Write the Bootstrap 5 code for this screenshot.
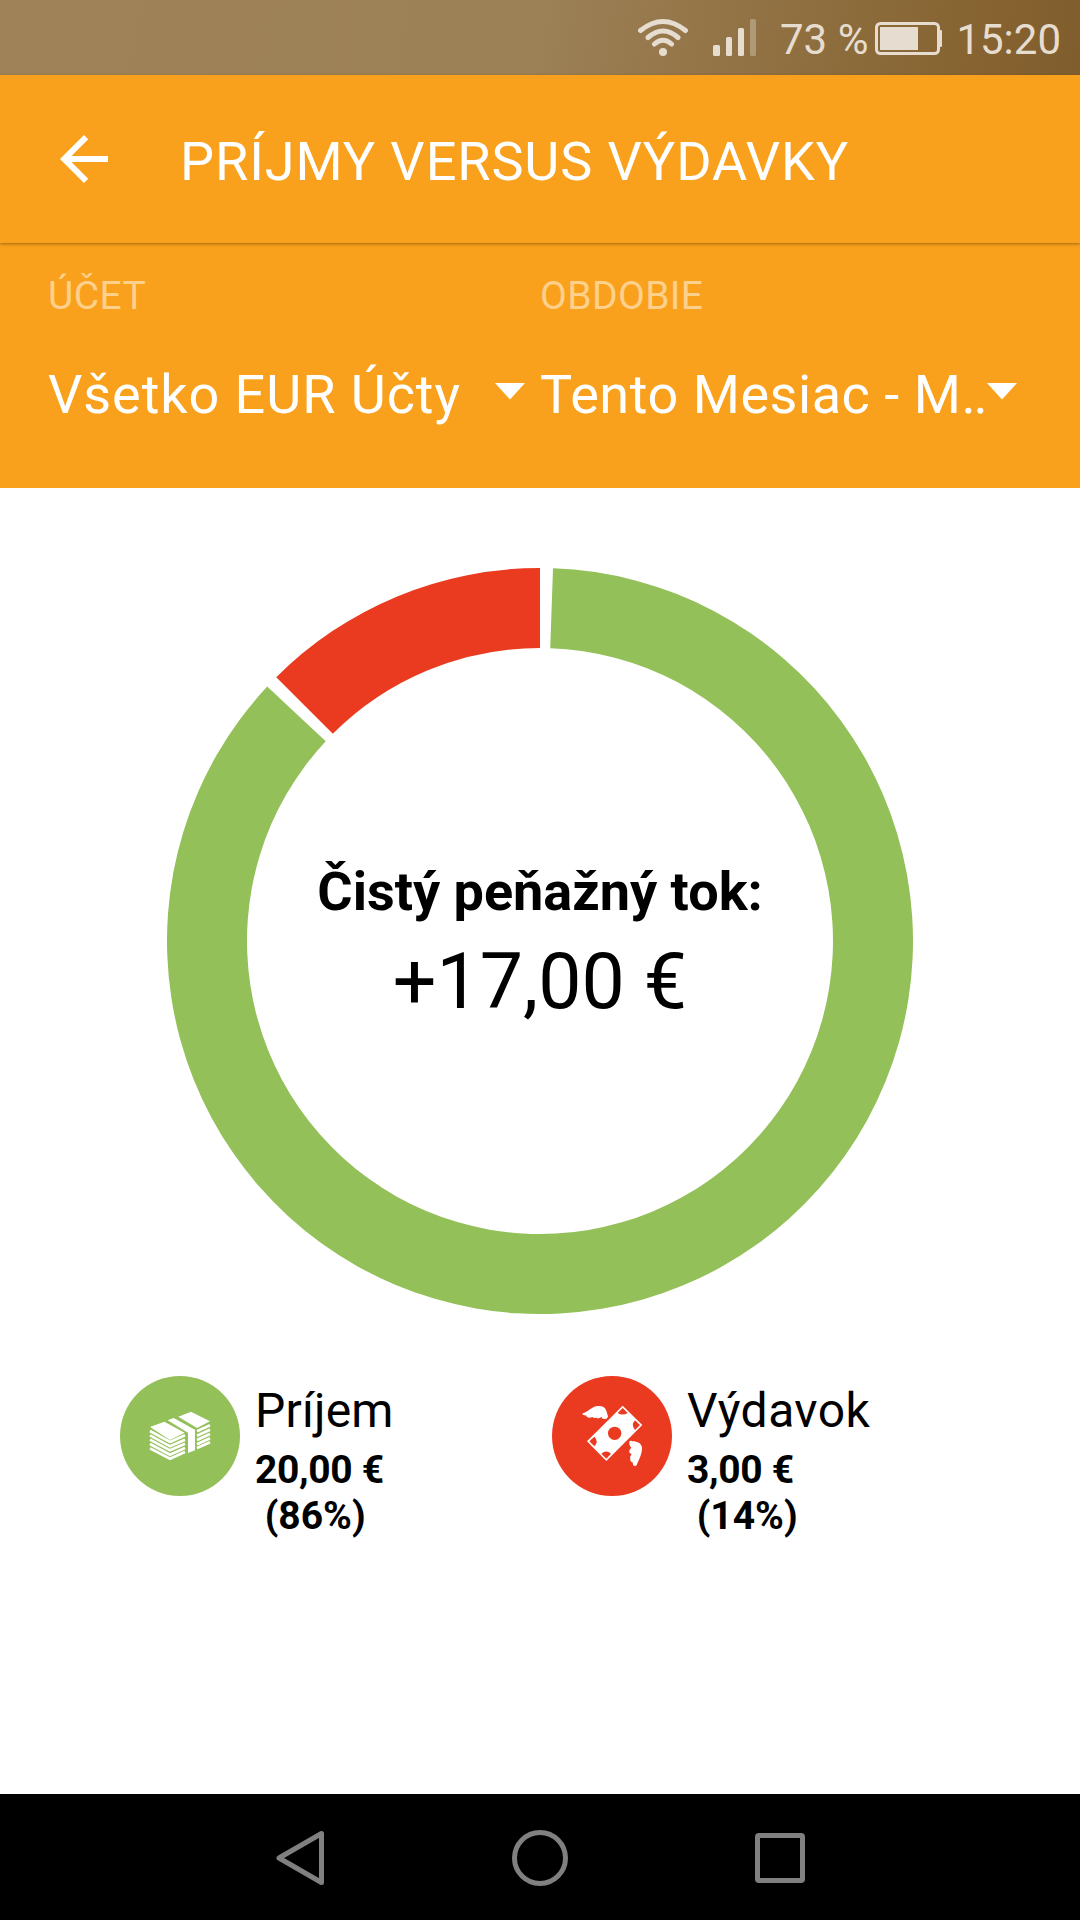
<!DOCTYPE html>
<html lang="sk">
<head>
<meta charset="utf-8">
<meta name="viewport" content="width=device-width, initial-scale=1">
<title>Príjmy versus výdavky</title>
<link href="https://cdn.jsdelivr.net/npm/bootstrap@5.3.0/dist/css/bootstrap.min.css" rel="stylesheet">
<style>
  body { font-family: Roboto, "Noto Sans", sans-serif; color: #000; background: #fff; }
  svg { display: block; flex: none; }
  .screen { width: 1080px; height: 1920px; overflow: hidden; }
  .status-bar { height: 75px; padding-right: 19px; color: #e6ddd0; background: linear-gradient(100deg, #9f8258 0%, #9c8056 50%, #85622f 92%, #805d2e 100%); }
  .status-text { font-size: 42px; line-height: 50px; padding-top: 4px; white-space: pre; }
  .signal { margin-left: 23px; }
  .percent { margin: 0 7px 0 24px; }
  .clock { margin-left: 13px; }
  .app-bar { height: 168px; padding-left: 48px; background: #f9a11d; color: #fff; position: relative; box-shadow: 0 1px 3px rgba(90, 55, 0, .55); }
  .app-title { font-size: 54px; line-height: 64px; font-weight: 400; padding-top: 5px; margin: 0 0 0 60px; white-space: nowrap; letter-spacing: .9px; }
  .filters { height: 245px; padding: 30px 48px 0; background: #f9a11d; color: #fff; }
  .filter-label { font-size: 39px; line-height: 46px; margin-bottom: 44px; color: #fdd08c; letter-spacing: .4px; }
  .filter-value { font-size: 54px; line-height: 64px; white-space: nowrap; letter-spacing: .93px; }
  .filter-period { letter-spacing: .55px; }
  .filter-cut { letter-spacing: -2.2px; }
  .caret { margin-top: -1px; }
  .donut { width: 746px; height: 746px; margin-top: 80px; }
  .donut-label { top: 292px; }
  .flow-title { font-size: 54px; line-height: 64px; margin-bottom: 12px; white-space: nowrap; }
  .flow-sum { font-size: 77px; line-height: 92px; white-space: nowrap; }
  .legend-row { margin-top: 62px; padding-left: 120px; }
  .legend-item { width: 432px; gap: 15px; }
  .legend-name { font-size: 48px; line-height: 56px; margin: 7px 0 8px; letter-spacing: .2px; }
  .legend-name-wide { letter-spacing: .45px; }
  .legend-sum { font-size: 39px; line-height: 46px; white-space: pre; }
  .legend-amount { letter-spacing: -.35px; }
  .nav-keys { height: 126px; padding-top: 2px; background: #000; }
</style>
</head>
<body>
<div class="screen d-flex flex-column">
  <header class="status-bar d-flex align-items-center justify-content-end">
    <svg width="52" height="75" viewBox="0 0 52 75" fill="none" stroke="#e6ddd0" stroke-width="5" stroke-linecap="round">
      <path d="M3.500 30.500Q26 12.500 48.500 30.500M11 37.500Q26 24.500 41 37.500M17.500 44Q26 36.500 34.500 44"/>
      <circle cx="26" cy="52" r="4" fill="#e6ddd0" stroke="none"/>
    </svg>
    <svg class="signal" width="44" height="75" viewBox="0 0 44 75" fill="#e6ddd0">
      <rect x="1" y="45" width="7" height="11" rx="1.500"/><rect x="14" y="37" width="6" height="19" rx="1.500"/>
      <rect x="26" y="28" width="6" height="28" rx="1.500"/><rect x="38" y="19" width="6" height="37" rx="1.500" fill="#b09976"/>
    </svg>
    <span class="status-text percent">73 %</span>
    <svg width="68" height="75" viewBox="0 0 68 75">
      <rect x="1.500" y="23.500" width="62" height="30" rx="4" fill="none" stroke="#e6ddd0" stroke-width="3"/>
      <rect x="5" y="27" width="38" height="23" fill="#e6ddd0"/><rect x="63" y="30" width="4" height="17" rx="1" fill="#e6ddd0"/>
    </svg>
    <span class="status-text clock">15:20</span>
  </header>

  <nav class="app-bar d-flex align-items-center">
    <svg width="72" height="72" viewBox="0 0 24 24" fill="#fff"><path d="M20 11H7.830l5.590-5.590L12 4l-8 8 8 8 1.410-1.410L7.830 13H20v-2z"/></svg>
    <h1 class="app-title">PRÍJMY VERSUS VÝDAVKY</h1>
  </nav>

  <section class="filters">
    <div class="row g-0">
      <div class="col-6">
        <div class="filter-label">ÚČET</div>
        <div class="d-flex align-items-start justify-content-between">
          <span class="filter-value">Všetko EUR Účty</span>
          <svg class="caret" width="45" height="64" viewBox="0 0 45 64" fill="#fff"><path d="M0 21H30L15 37.500Z"/></svg>
        </div>
      </div>
      <div class="col-6">
        <div class="filter-label">OBDOBIE</div>
        <div class="d-flex align-items-start justify-content-between">
          <span class="filter-value filter-period">Tento Mesiac - M<span class="filter-cut">..</span></span>
          <svg class="caret" width="45" height="64" viewBox="0 0 45 64" fill="#fff"><path d="M0 21H30L15 37.500Z"/></svg>
        </div>
      </div>
    </div>
  </section>

  <main class="flex-grow-1">
    <div class="donut mx-auto position-relative">
      <svg width="746" height="746" viewBox="-373 -373 746 746">
        <path fill="#93c059" d="M13.020-372.770A373 373 0 1 1-272.800-254.380L-214.290-199.830A293 293 0 1 0 10.230-292.820Z"/>
        <path fill="#ea3a20" d="M-263.750-263.750A373 373 0 0 1 0-373V-293A293 293 0 0 0-207.180-207.180Z"/>
      </svg>
      <div class="donut-label position-absolute start-0 w-100 text-center">
        <div class="flow-title fw-bold">Čistý peňažný tok:</div>
        <div class="flow-sum">+17,00 €</div>
      </div>
    </div>
    <div class="legend-row d-flex">
      <div class="legend-item d-flex align-items-start">
        <svg width="120" height="120" viewBox="60 48 360 360">
          <circle cx="240" cy="228" r="180" fill="#93c059"/>
          <path fill="#fff" d="M150 201L193 185L254 218L210 240ZM203 181L221 174L285 209V271L264 279V218ZM235 170L273 155L330 184L291 204Z"/>
          <path fill="none" stroke="#fff" stroke-width="8" d="M150 213L210 246L255 226M150 226L210 259L255 239M150 239L210 271L255 251M150 252L210 284L255 264M150 265L210 296L255 276M291 214L330 196M291 227L330 209M291 240L330 222M291 253L330 235M291 264L330 247"/>
        </svg>
        <div>
          <div class="legend-name">Príjem</div>
          <div class="legend-sum legend-amount fw-bold">20,00 €</div>
          <div class="legend-sum fw-bold"> (86%)</div>
        </div>
      </div>
      <div class="legend-item d-flex align-items-start">
        <svg width="120" height="120" viewBox="66 48 360 360">
          <circle cx="246" cy="228" r="180" fill="#ea3a20"/>
          <path fill="#fff" d="M278 137L337 195L229 303L171 244Z"/>
          <g fill="#ea3a20">
            <circle cx="254" cy="220" r="20"/>
            <path d="M278 144L293 159Q278 168 263 159ZM315 181L330 195L315 210Q302 195 315 181ZM193 230L178 244L193 259Q207 244 193 230ZM214 281Q229 268 243 281L229 296Z"/>
          </g>
          <path fill="#fff" d="M156 161C170 158 182 144 197 139C208 136 221 138 225 145C229 152 232 160 234 170Q231 178 224 177Q217 178 214 171Q206 177 199 173Q193 176 187 171Q178 175 171 171Q168 168 169 166Q160 167 156 161ZM298 244Q303 240 308 244C322 244 335 250 336 264C336 285 325 301 320 316Q314 320 310 316Q308 311 308 307Q300 306 301 298Q299 289 305 281Q296 280 298 272Q299 267 304 263Q296 255 298 244Z"/>
        </svg>
        <div>
          <div class="legend-name legend-name-wide">Výdavok</div>
          <div class="legend-sum legend-amount fw-bold">3,00 €</div>
          <div class="legend-sum fw-bold"> (14%)</div>
        </div>
      </div>
    </div>
  </main>

  <footer class="nav-keys d-flex justify-content-center align-items-center">
    <svg width="540" height="64" viewBox="270 1826 540 64" fill="none" stroke="#808080" stroke-width="5" stroke-linejoin="round">
      <path d="M279 1858L321.500 1833.500V1882.500Z"/>
      <circle cx="540" cy="1858" r="25.500"/>
      <rect x="757.500" y="1835.500" width="45" height="45" rx="1.500"/>
    </svg>
  </footer>
</div>
<script src="https://cdn.jsdelivr.net/npm/bootstrap@5.3.0/dist/js/bootstrap.bundle.min.js"></script>
</body>
</html>
